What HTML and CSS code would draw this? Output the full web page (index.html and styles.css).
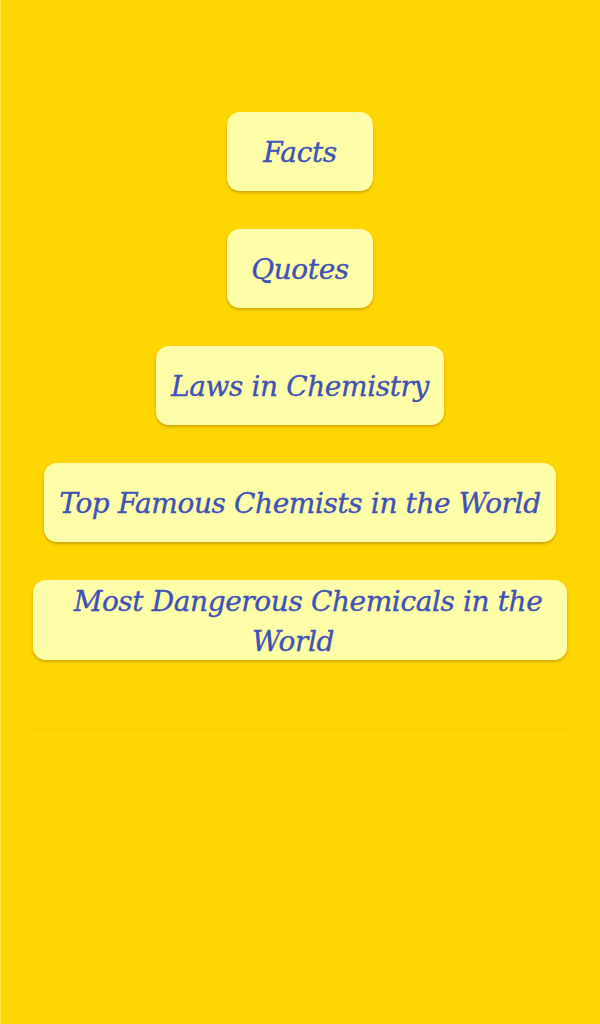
FILE: index.html
```html
<!DOCTYPE html>
<html lang="en">
<head>
    <meta charset="UTF-8">
    <meta name="viewport" content="width=device-width, initial-scale=1.0">
    <title>Chemistry</title>
    <link rel="stylesheet" href="styles.css">
</head>
<body>
    <div class="screen">
        <div class="menu">
            <button class="menu-btn">Facts</button>
            <button class="menu-btn">Quotes</button>
            <button class="menu-btn">Laws in Chemistry</button>
            <button class="menu-btn">Top Famous Chemists in the World</button>
            <button class="menu-btn wide">Most Dangerous Chemicals in the World</button>
        </div>
        <div class="divider"></div>
    </div>
</body>
</html>
```
FILE: styles.css
```css
html, body {
    margin: 0;
    height: 100%;
}
body {
    /* thin lighter strip on the left edge */
    background: linear-gradient(to right, #ffe24a 1px, #ffd600 1px);
    font-family: "DejaVu Serif", serif;
}
.screen {
    padding: 112px 33px 0 33px;
}
.menu {
    display: flex;
    flex-direction: column;
    align-items: center;
    gap: 38px;
}
.menu-btn {
    min-width: 146px;
    height: 79px;
    padding: 2px 15px 0;
    background: #ffffaa;
    color: #3f51b5;
    border: none;
    border-radius: 13px;
    box-shadow: 0 2px 3px rgba(150, 110, 0, 0.45);
    font-family: "DejaVu Serif", serif;
    font-style: italic;
    font-size: 28px;
    letter-spacing: -0.4px;
    -webkit-text-stroke: 0.35px currentColor;
    line-height: 40px;
    white-space: nowrap;
    cursor: pointer;
}
/* long label wraps onto two lines, first line sits a little to the right */
.menu-btn.wide {
    width: 100%;
    height: 80px;
    white-space: normal;
    padding: 2px 14px 0 0;
    text-indent: 30px;
}
.divider {
    height: 1px;
    background: #f2cc00;
    margin-top: 69px;
}
```
